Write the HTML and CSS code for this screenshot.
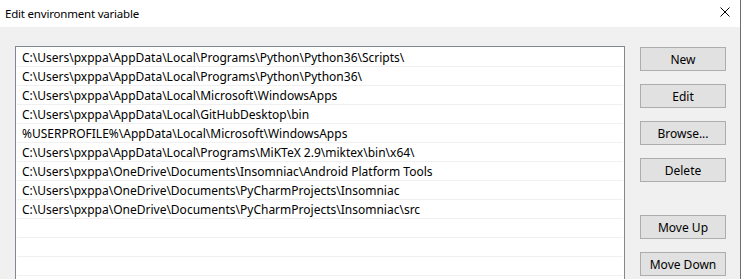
FILE: index.html
```html
<!DOCTYPE html>
<html>

<head>
	<title>Edit environment variable</title>
	<meta charset=utf-8>
	<link rel="stylesheet" href="styles.css">
</head>

<body>
	<div id="window">
		<div id="titlebar">
			<div class="title">Edit environment variable</div>
			<div class="close">
				<svg width="10" height="10" viewBox="0 0 10 10">
					<path d="M0.5 0.5 L9.5 9.5 M9.5 0.5 L0.5 9.5" stroke="#000" stroke-width="1" fill="none" />
				</svg>
			</div>
		</div>
		<div id="content">
			<div id="list">
				<div class="row">C:\Users\pxppa\AppData\Local\Programs\Python\Python36\Scripts\</div>
				<div class="row">C:\Users\pxppa\AppData\Local\Programs\Python\Python36\</div>
				<div class="row">C:\Users\pxppa\AppData\Local\Microsoft\WindowsApps</div>
				<div class="row">C:\Users\pxppa\AppData\Local\GitHubDesktop\bin</div>
				<div class="row">%USERPROFILE%\AppData\Local\Microsoft\WindowsApps</div>
				<div class="row">C:\Users\pxppa\AppData\Local\Programs\MiKTeX 2.9\miktex\bin\x64\</div>
				<div class="row">C:\Users\pxppa\OneDrive\Documents\Insomniac\Android Platform Tools</div>
				<div class="row">C:\Users\pxppa\OneDrive\Documents\PyCharmProjects\Insomniac</div>
				<div class="row">C:\Users\pxppa\OneDrive\Documents\PyCharmProjects\Insomniac\src</div>
				<div class="row"></div>
				<div class="row"></div>
				<div class="row"></div>
				<div class="row"></div>
			</div>
			<div id="buttons">
				<button class="btn">New</button>
				<button class="btn">Edit</button>
				<button class="btn">Browse...</button>
				<button class="btn">Delete</button>
				<button class="btn gap">Move Up</button>
				<button class="btn">Move Down</button>
			</div>
		</div>
	</div>
</body>

</html>
```

FILE: styles.css
```css
body {
	margin: 0;
	font-family: 'Noto Sans', 'Open Sans', sans-serif;
	font-size: 12px;
	color: black;
	background: white;
	overflow: hidden;
}

#window {
	width: 741px;
	height: 279px;
	box-sizing: border-box;
	border-right: 1px solid #6e6e6e;
	background: #f0f0f0;
	overflow: hidden;
}

#titlebar {
	height: 27px;
	background: white;
	display: flex;
	align-items: center;
	justify-content: space-between;
}

.title {
	padding-left: 5px;
	font-size: 11.5px;
	letter-spacing: -0.2px;
	margin-top: -1px;
}

.close {
	width: 10px;
	height: 10px;
	margin-right: 10px;
	margin-top: -4px;
	display: flex;
}

#content {
	display: flex;
	padding: 19px 0 0 15px;
}

#list {
	width: 610px;
	height: 260px;
	box-sizing: border-box;
	padding-top: 1px;
	border: 1px solid #828790;
	border-bottom: none;
	background: white;
}

.row {
	height: 18px;
	line-height: 19px;
	margin: 0 1px;
	padding-left: 5px;
	border-bottom: 1px solid #f0f0f0;
	white-space: nowrap;
}

#buttons {
	display: flex;
	flex-direction: column;
	gap: 13px;
	margin-left: 15px;
	padding-top: 1px;
}

.btn {
	width: 86px;
	height: 24px;
	padding: 0;
	box-sizing: border-box;
	border: 1px solid #adadad;
	background: #e1e1e1;
	color: black;
	font-family: 'Noto Sans', 'Open Sans', sans-serif;
	font-size: 12px;
}

.gap {
	margin-top: 20px;
}
```
